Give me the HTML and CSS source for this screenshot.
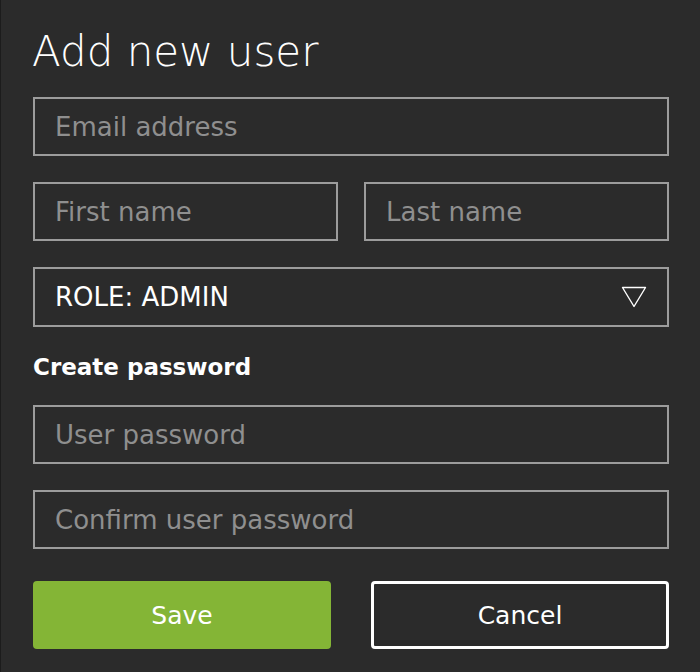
FILE: index.html
```html
<!DOCTYPE html>
<html lang="en">
<head>
  <meta charset="UTF-8">
  <meta name="viewport" content="width=device-width, initial-scale=1">
  <title>Add new user</title>
  <link rel="stylesheet" href="styles.css">
</head>
<body>
  <div class="modal">
    <h1>Add new user</h1>
    <form class="user-form">
      <input type="email" placeholder="Email address">
      <div class="row">
        <input type="text" placeholder="First name">
        <input type="text" placeholder="Last name">
      </div>
      <div class="select">
        <span>ROLE: ADMIN</span>
        <svg width="26" height="22" viewBox="0 0 26 22">
          <path d="M1.5 1.5 L24.5 1.5 L13 20.5 Z" fill="none" stroke="#fff" stroke-width="1.4" stroke-linejoin="round"/>
        </svg>
      </div>
      <h2>Create password</h2>
      <input type="password" placeholder="User password">
      <input type="password" placeholder="Confirm user password">
      <div class="buttons">
        <button type="button" class="save">Save</button>
        <button type="button" class="cancel">Cancel</button>
      </div>
    </form>
  </div>
</body>
</html>
```

FILE: styles.css
```css
body {
  margin: 0;
  background: #2b2b2b;
  font-family: 'DejaVu Sans', sans-serif;
  color: white;
}

.modal {
  height: 672px;
  box-sizing: border-box;
  padding: 27px 31px 0 33px;
  box-shadow: inset 1px 0 0 #1c1c1c;
}

h1 {
  margin: 0 0 20px 0;
  font-size: 42px;
  font-weight: 200;
  line-height: 50px;
  margin-left: -1px;
}

.user-form {
  display: flex;
  flex-direction: column;
  gap: 26px;
}

input, .select {
  box-sizing: border-box;
  width: 100%;
  height: 59px;
  margin: 0;
  padding: 0 0 0 20px;
  background: transparent;
  border: 2px solid #9c9c9c;
  border-radius: 0;
  outline: none;
  font-family: inherit;
  font-size: 26px;
  color: white;
}

input::placeholder {
  color: #8f8f8f;
}

.row {
  display: grid;
  grid-template-columns: 1fr 1fr;
  gap: 26px;
}

.select {
  display: flex;
  align-items: center;
  justify-content: space-between;
  height: 60px;
  padding-right: 20px;
}

h2 {
  margin: 2px 0 0 0;
  font-size: 23px;
  font-weight: 600;
  line-height: 24px;
}

.buttons {
  display: grid;
  grid-template-columns: 1fr 1fr;
  gap: 40px;
  margin-top: 6px;
}

.buttons button {
  box-sizing: border-box;
  width: 100%;
  height: 68px;
  padding: 0;
  border-radius: 4px;
  font-family: inherit;
  font-size: 25px;
  font-weight: 500;
  color: white;
  cursor: pointer;
}

.save {
  background: #84b536;
  border: none;
}

.cancel {
  background: transparent;
  border: 3px solid white;
}
```
